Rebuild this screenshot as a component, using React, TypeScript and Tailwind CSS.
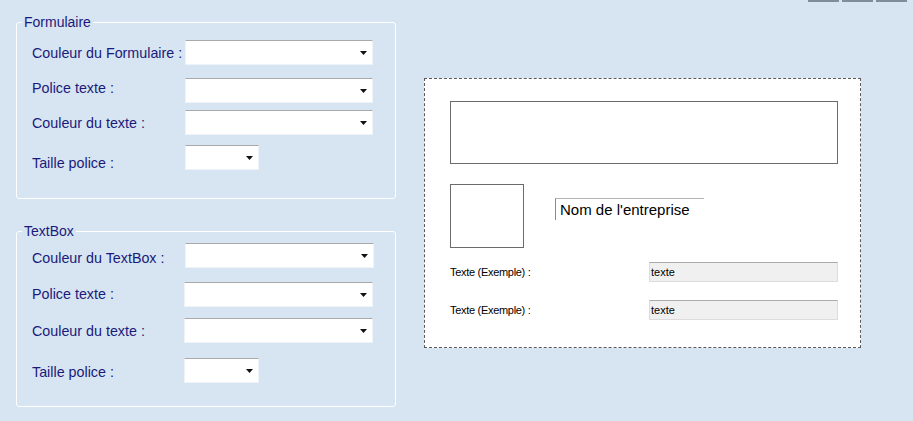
import React from "react";

const font = { fontFamily: '"Liberation Sans", Arial, sans-serif' };

function Combo({ w }: { w: string }) {
  return (
    <div
      className={`${w} h-[25px] bg-white border-t border-t-[#a9a9a9] border-x border-b border-x-[#eef3f8] border-b-[#eef3f8] flex items-center justify-end pr-[5px]`}
    >
      <svg width="7" height="4" viewBox="0 0 7 4" className="mt-[1px]">
        <polygon points="0,0 7,0 3.5,4" fill="#111" />
      </svg>
    </div>
  );
}

function Row({
  label,
  labelOffset,
  comboW,
  comboX,
  mt,
}: {
  label: string;
  labelOffset: string;
  comboW: string;
  comboX: string;
  mt: string;
}) {
  return (
    <div className={`flex items-center h-[25px] ${mt}`}>
      <span className={`${comboX} text-[14.3px] leading-[16px] text-[#1a1a7a] whitespace-nowrap ${labelOffset}`}>
        {label}
      </span>
      <Combo w={comboW} />
    </div>
  );
}

function Group({
  title,
  rows,
  className,
}: {
  title: string;
  rows: { label: string; labelOffset: string; comboW: string; comboX: string; mt: string }[];
  className: string;
}) {
  return (
    <fieldset className={`border border-white rounded-[3px] w-[380px] pl-[15px] ${className}`}>
      <legend className="-ml-[10px] px-[2px] text-[14px] leading-[14px] text-[#1a1a7a]">{title}</legend>
      {rows.map((r, i) => (
        <Row key={i} {...r} />
      ))}
    </fieldset>
  );
}

export default function App() {
  return (
    <div style={font} className="relative w-[913px] h-[421px] bg-[#d7e4f2] overflow-hidden flex pl-[16px]">
      <div className="absolute top-0 right-[6px] flex gap-[3px]">
        <div className="w-[31px] h-[2px] bg-[#7f8c99]" />
        <div className="w-[31px] h-[2px] bg-[#7f8c99]" />
        <div className="w-[31px] h-[2px] bg-[#7f8c99]" />
      </div>

      <div className="flex flex-col w-[380px]">
        <Group
          title="Formulaire"
          className="mt-[15px] pb-[28px]"
          rows={[
            { label: "Couleur du Formulaire :", labelOffset: "mt-[1px]", comboW: "w-[188px]", comboX: "w-[153px]", mt: "mt-[11px]" },
            { label: "Police texte :", labelOffset: "-mt-[5px]", comboW: "w-[188px]", comboX: "w-[153px]", mt: "mt-[13px]" },
            { label: "Couleur du texte :", labelOffset: "mt-[1px]", comboW: "w-[188px]", comboX: "w-[153px]", mt: "mt-[7px]" },
            { label: "Taille police :", labelOffset: "mt-[10px]", comboW: "w-[74px]", comboX: "w-[153px]", mt: "mt-[10px]" },
          ]}
        />
        <Group
          title="TextBox"
          className="mt-[25px] pb-[23px]"
          rows={[
            { label: "Couleur du TextBox :", labelOffset: "mt-[4px]", comboW: "w-[189px]", comboX: "w-[153px]", mt: "mt-[5px]" },
            { label: "Police texte :", labelOffset: "-mt-[1px]", comboW: "w-[189px]", comboX: "w-[152px]", mt: "mt-[14px]" },
            { label: "Couleur du texte :", labelOffset: "mt-[1px]", comboW: "w-[189px]", comboX: "w-[152px]", mt: "mt-[11px]" },
            { label: "Taille police :", labelOffset: "mt-[3px]", comboW: "w-[75px]", comboX: "w-[152px]", mt: "mt-[15px]" },
          ]}
        />
      </div>

      <div className="ml-[28px] mt-[78px] w-[437px] h-[270px] bg-white border border-dashed border-[#5a5a5a] pl-[25px] pt-[22px] flex flex-col">
        <div className="w-[388px] h-[63px] border border-[#6b6b6b]" />
        <div className="flex mt-[20px]">
          <div className="w-[74px] h-[64px] border border-[#6b6b6b]" />
          <div className="ml-[31px] mt-[14px] w-[149px] h-[22px] border-t border-l border-t-[#b4b4b4] border-l-[#8a8a8a] pl-[4px] pt-[2px] text-[15px] leading-[18px] text-black whitespace-nowrap">
            Nom de l'entreprise
          </div>
        </div>
        <div className="flex items-center justify-between w-[388px] mt-[14px]">
          <span className="text-[11px] leading-[13px] text-black tracking-[-0.3px]">Texte (Exemple) :</span>
          <div className="w-[189px] h-[20px] bg-[#f0f0f0] border border-[#dcdcdc] border-t-[#ababab] flex items-center pl-[1px] text-[11px] leading-[13px] text-black">
            texte
          </div>
        </div>
        <div className="flex items-center justify-between w-[388px] mt-[18px]">
          <span className="text-[11px] leading-[13px] text-black tracking-[-0.3px]">Texte (Exemple) :</span>
          <div className="w-[189px] h-[20px] bg-[#f0f0f0] border border-[#dcdcdc] border-t-[#ababab] flex items-center pl-[1px] text-[11px] leading-[13px] text-black">
            texte
          </div>
        </div>
      </div>
    </div>
  );
}
